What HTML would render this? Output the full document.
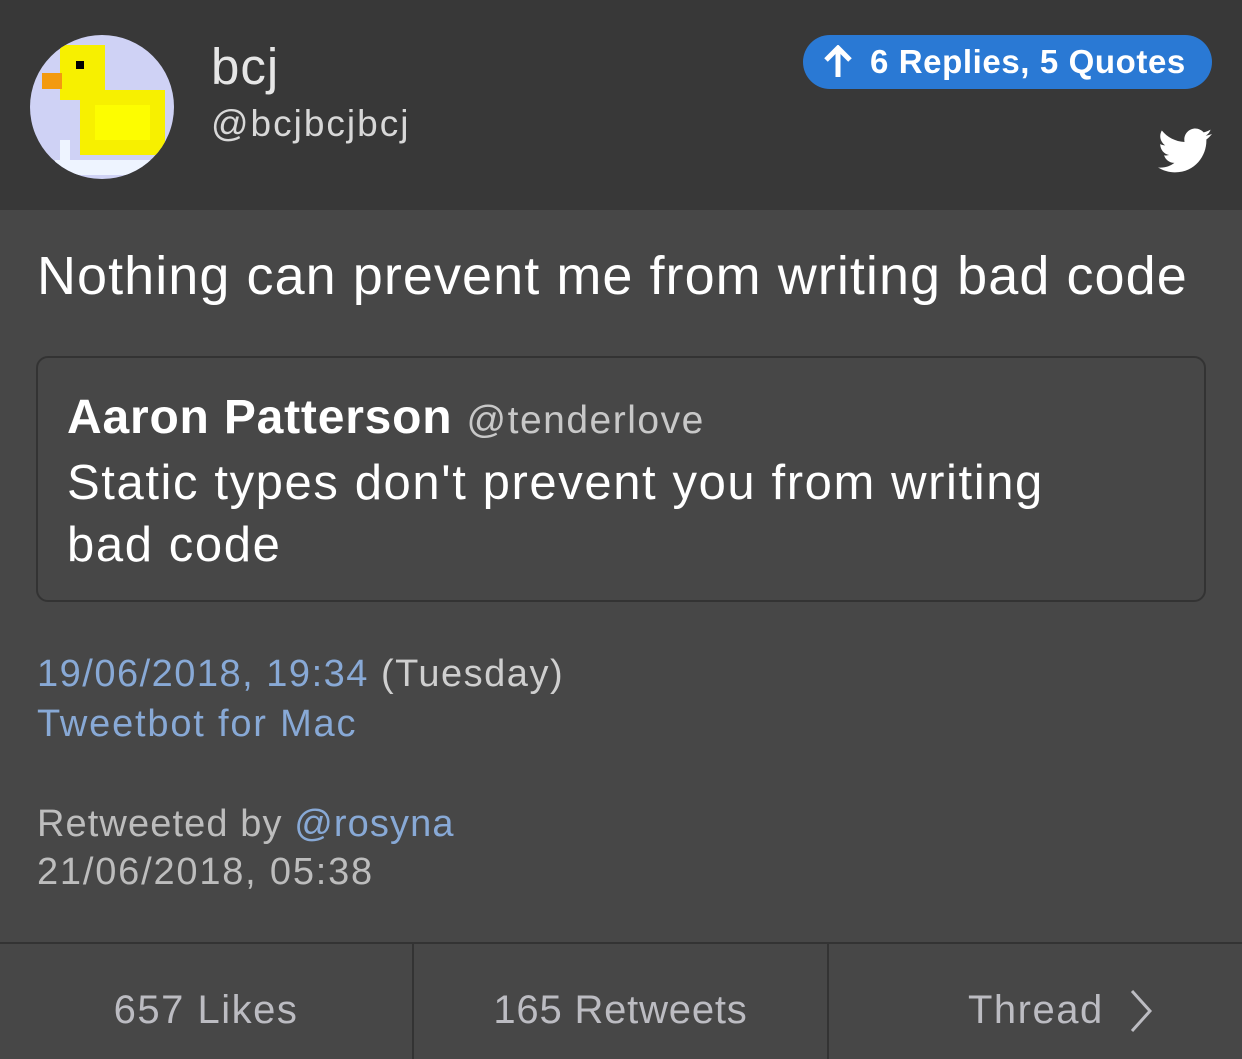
<!DOCTYPE html>
<html><head><meta charset="utf-8"><style>
*{margin:0;padding:0;box-sizing:border-box}
body{width:1242px;height:1059px;background:#474747;font-family:"Liberation Sans",sans-serif;overflow:hidden;position:relative}
.hdr{position:absolute;left:0;top:0;width:1242px;height:210px;background:#383838}
.t{position:absolute;white-space:nowrap}
</style></head><body>
<div class="hdr"></div>
<svg style="position:absolute;left:30px;top:35px" width="144" height="144" viewBox="0 0 144 144">
<defs><clipPath id="c"><circle cx="72" cy="72" r="72"/></clipPath></defs>
<g clip-path="url(#c)">
<rect width="144" height="144" fill="#cfd2f5"/>
<rect x="30" y="10" width="45" height="55" fill="#f7f000"/>
<rect x="50" y="55" width="85" height="65" fill="#f7f000"/>
<rect x="65" y="70" width="55" height="35" fill="#fdfd00"/>
<rect x="12" y="38" width="20" height="16" fill="#f39a10"/>
<rect x="46" y="26" width="8" height="8" fill="#000"/>
<rect x="25" y="125" width="120" height="15" fill="#eef4ff"/>
<rect x="30" y="105" width="10" height="20" fill="#eef4ff"/>
</g></svg>
<div class="t" style="left:211px;top:37px;font-size:51px;color:#e6e6e6;letter-spacing:1px">bcj</div>
<div class="t" style="left:211px;top:103px;font-size:37px;color:#d8d8d8;letter-spacing:2px">@bcjbcjbcj</div>
<div style="position:absolute;left:803px;top:35px;width:409px;height:54px;border-radius:27px;background:#2a79d4"></div>
<svg style="position:absolute;left:822px;top:45px" width="32" height="34" viewBox="0 0 32 34"><path d="M16 3V32M4 15L16 3L28 15" stroke="#fff" stroke-width="5" fill="none"/></svg>
<div class="t" style="left:870px;top:43px;font-size:33px;color:#fff;font-weight:bold;letter-spacing:0.6px">6 Replies, 5 Quotes</div>
<svg style="position:absolute;left:1158px;top:128px" width="54" height="46" viewBox="0 0 24 20"><path fill="#fff" d="M24 2.4c-.9.4-1.8.7-2.8.8 1-.6 1.8-1.6 2.2-2.7-1 .6-2 1-3.1 1.2C19.3.7 18 0 16.6 0c-2.700 0-4.900 2.200-4.900 4.900 0 .4 0 .8.1 1.1C7.7 5.8 4.1 3.9 1.7.9c-.4.7-.7 1.6-.7 2.5 0 1.700.9 3.200 2.200 4.100-.8 0-1.600-.2-2.200-.6v.1c0 2.400 1.700 4.400 3.900 4.800-.4.1-.8.2-1.300.2-.3 0-.6 0-.9-.1.6 2 2.400 3.400 4.600 3.400-1.700 1.300-3.800 2.100-6.100 2.100-.4 0-.8 0-1.200-.1 2.200 1.400 4.800 2.200 7.500 2.200 9.100 0 14-7.500 14-14v-.6c1-.7 1.800-1.600 2.500-2.500z"/></svg>
<div class="t" style="left:37px;top:245px;font-size:54px;color:#fff;letter-spacing:1.05px">Nothing can prevent me from writing bad code</div>
<div style="position:absolute;left:36px;top:356px;width:1170px;height:246px;border:2px solid #333;border-radius:12px"></div>
<div class="t" style="left:67px;top:390px;font-size:48px;color:#fff;font-weight:bold;letter-spacing:0.8px">Aaron Patterson <span style="font-weight:normal;font-size:39px;color:#c8c8c8;letter-spacing:1.5px">@tenderlove</span></div>
<div class="t" style="left:67px;top:452px;font-size:49px;color:#fff;line-height:62px;letter-spacing:1.6px">Static types don't prevent you from writing<br>bad code</div>
<div class="t" style="left:37px;top:653px;font-size:38px;color:#88a9d6;letter-spacing:1.5px">19/06/2018, 19:34 <span style="color:#cfcfcf">(Tuesday)</span></div>
<div class="t" style="left:37px;top:703px;font-size:38px;color:#88a9d6;letter-spacing:1.8px">Tweetbot for Mac</div>
<div class="t" style="left:37px;top:803px;font-size:38px;color:#bdbdbd;letter-spacing:1.1px">Retweeted by <span style="color:#88a9d6">@rosyna</span></div>
<div class="t" style="left:37px;top:851px;font-size:38px;color:#bdbdbd;letter-spacing:1.8px">21/06/2018, 05:38</div>
<div style="position:absolute;left:0;top:942px;width:1242px;height:2px;background:#333"></div>
<div style="position:absolute;left:412px;top:943px;width:2px;height:116px;background:#333"></div>
<div style="position:absolute;left:827px;top:943px;width:2px;height:116px;background:#333"></div>
<div class="t" style="left:0;width:412px;text-align:center;top:988px;font-size:40px;color:#bcbcc2;letter-spacing:1.5px">657 Likes</div>
<div class="t" style="left:414px;width:413px;text-align:center;top:988px;font-size:40px;color:#bcbcc2;letter-spacing:0.8px">165 Retweets</div>
<div class="t" style="left:968px;top:988px;font-size:40px;color:#bcbcc2;letter-spacing:1.5px">Thread</div>
<svg style="position:absolute;left:1128px;top:989px" width="26" height="44" viewBox="0 0 26 44"><path d="M4 2L22 22L4 42" stroke="#bcbcc2" stroke-width="3" fill="none"/></svg>
</body></html>
